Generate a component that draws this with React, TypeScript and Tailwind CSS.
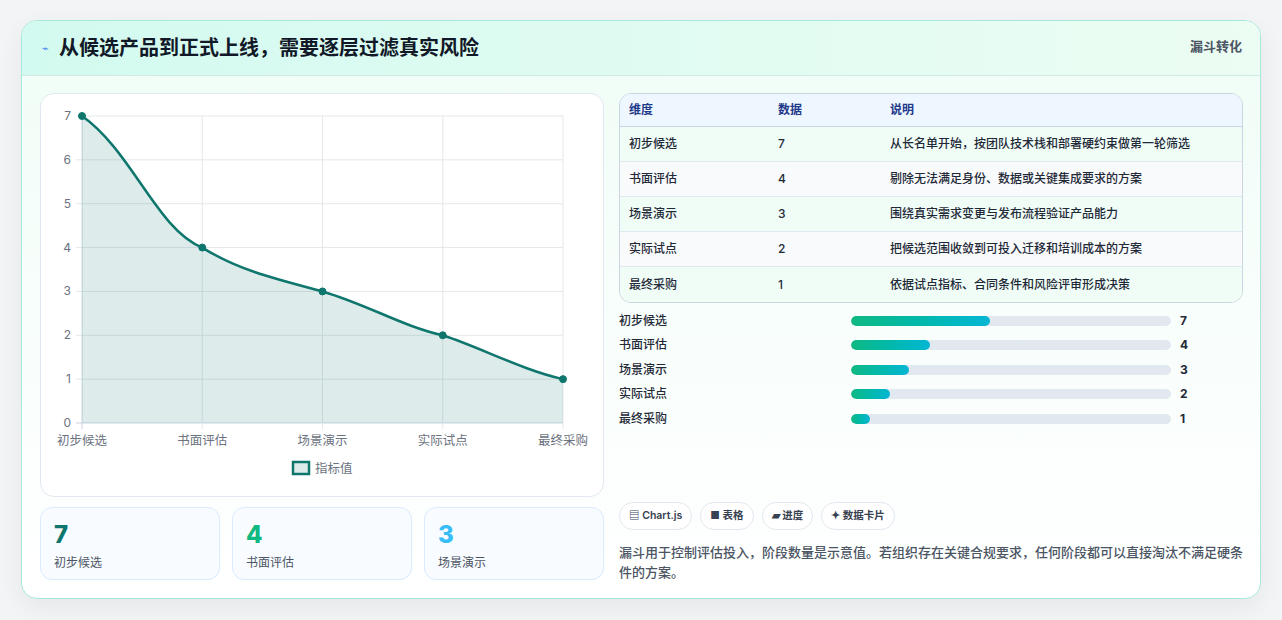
import React from "react";

const rows = [
  ["初步候选", 7, "从长名单开始，按团队技术栈和部署硬约束做第一轮筛选"],
  ["书面评估", 4, "剔除无法满足身份、数据或关键集成要求的方案"],
  ["场景演示", 3, "围绕真实需求变更与发布流程验证产品能力"],
  ["实际试点", 2, "把候选范围收敛到可投入迁移和培训成本的方案"],
  ["最终采购", 1, "依据试点指标、合同条件和风险评审形成决策"],
] as const;
const barW = [139, 79, 58, 39, 19];

function Chart() {
  const x0 = 41, x1 = 522, y0 = 21, y1 = 328;
  const xs = [0, 1, 2, 3, 4].map((i) => x0 + (i * (x1 - x0)) / 4);
  const y = (v: number) => y1 - (v * (y1 - y0)) / 7;
  const vals = [7, 4, 3, 2, 1];
  const pts = vals.map((v, i) => [xs[i], y(v)]);
  const line = `M${pts[0][0]},${pts[0][1]} C${xs[0] + 50},${y(6.2)} ${xs[1] - 45},${y(4.4)} ${pts[1][0]},${pts[1][1]} C${xs[1] + 35},${y(3.5)} ${xs[2] - 50},${y(3.3)} ${pts[2][0]},${pts[2][1]} C${xs[2] + 45},${y(2.7)} ${xs[3] - 40},${y(2.2)} ${pts[3][0]},${pts[3][1]} C${xs[3] + 40},${y(1.7)} ${xs[4] - 40},${y(1.2)} ${pts[4][0]},${pts[4][1]}`;
  return (
    <svg width="562" height="400" className="block">
      {[0, 1, 2, 3, 4, 5, 6, 7].map((v) => (
        <g key={v}>
          <line x1={x0 - 6} x2={x1} y1={y(v)} y2={y(v)} stroke={v === 0 ? "#cbd5e1" : "#e5e7eb"} />
          <text x={x0 - 11} y={y(v) + 4} textAnchor="end" fontSize="12" fill="#6b7280">{v}</text>
        </g>
      ))}
      {xs.map((x, i) => (
        <line key={i} x1={x} x2={x} y1={y0} y2={y1 + 6} stroke={i === 0 ? "#cbd5e1" : "#e5e7eb"} />
      ))}
      <path d={`${line} L${x1},${y1} L${x0},${y1} Z`} fill="rgba(15,118,110,0.14)" />
      <path d={line} fill="none" stroke="#0f766e" strokeWidth="2.5" />
      {pts.map(([x, yy], i) => (
        <circle key={i} cx={x} cy={yy} r="3.5" fill="#0f766e" stroke="#0f766e" />
      ))}
      {rows.map((r, i) => (
        <text key={i} x={xs[i]} y={350} textAnchor="middle" fontSize="12.5" fill="#6b7280">{r[0]}</text>
      ))}
      <rect x="252" y="367" width="16" height="12" fill="rgba(15,118,110,0.14)" stroke="#0f766e" strokeWidth="2.5" />
      <text x="274" y="378" fontSize="12.5" fill="#6b7280">指标值</text>
    </svg>
  );
}

export default function App() {
  return (
    <div className="w-[1282px] h-[620px] bg-[#f3f4f6] pt-[20px] pl-[21px]" style={{ fontFamily: "Inter, 'Noto Sans CJK SC', sans-serif" }}>
      <div className="w-[1240px] h-[579px] rounded-[16px] border border-[#a7e8dc] bg-gradient-to-b from-[#f0fdf7] to-white overflow-hidden shadow-[0_8px_24px_rgba(0,0,0,0.06)]">
        <div className="h-[55px] bg-gradient-to-r from-[#d3faf0] to-[#ecfdf3] border-b border-[#cfe9e4] flex items-center justify-between pl-[20px] pr-[18px]">
          <div className="flex items-center gap-[10px]">
            <span className="text-[11px] text-[#3b82f6]">⌁</span>
            <span className="text-[20px] font-bold text-[#111827]">从候选产品到正式上线，需要逐层过滤真实风险</span>
          </div>
          <span className="text-[13px] font-bold text-[#4b5563] self-start mt-[16px]">漏斗转化</span>
        </div>
        <div className="flex gap-[15px] pl-[18px] pt-[17px]">
          <div className="w-[564px] flex flex-col gap-[10px]">
            <div className="h-[404px] rounded-[14px] border border-[#e2e8f0] bg-white pt-[1px]">
              <Chart />
            </div>
            <div className="flex gap-[12px]">
              {[["7", "text-[#0f766e]", "初步候选"], ["4", "text-[#10b981]", "书面评估"], ["3", "text-[#38bdf8]", "场景演示"]].map(([n, c, l]) => (
                <div key={l} className="w-[180px] h-[73px] rounded-[12px] border border-[#dbeafe] bg-[#f8fbff] px-[13px] pt-[13px]">
                  <div className={`text-[24px] leading-[28px] font-extrabold ${c}`}>{n}</div>
                  <div className="text-[12px] text-[#4b5563] mt-[5px]">{l}</div>
                </div>
              ))}
            </div>
          </div>
          <div className="w-[624px]">
            <div className="rounded-[12px] border border-[#cbd5e1] overflow-hidden text-[12px] font-medium">
              <div className="flex h-[33px] items-center bg-[#eef6ff] border-b border-[#cbd5e1] text-[#1e3a8a] font-semibold">
                <div className="w-[158px] pl-[9px]">维度</div>
                <div className="w-[112px]">数据</div>
                <div>说明</div>
              </div>
              {rows.map((r, i) => (
                <div key={i} className={`flex h-[35px] items-center text-[#1f2937] ${i % 2 ? "bg-[#f8fafc]" : "bg-[#f0fdf7]"} ${i < 4 ? "border-b border-[#e2e8f0]" : ""}`}>
                  <div className="w-[158px] pl-[9px]">{r[0]}</div>
                  <div className="w-[112px]">{r[1]}</div>
                  <div>{r[2]}</div>
                </div>
              ))}
            </div>
            <div className="flex flex-col gap-[9.5px] mt-[10px]">
              {rows.map((r, i) => (
                <div key={i} className="flex items-center h-[15px] text-[12px] font-medium text-[#1f2937]">
                  <div className="w-[232px]">{r[0]}</div>
                  <div className="w-[320px] h-[10px] rounded-full bg-[#e2e8f0] overflow-hidden">
                    <div className="h-full rounded-full bg-gradient-to-r from-[#10b981] to-[#06b6d4]" style={{ width: barW[i] }} />
                  </div>
                  <div className="ml-[9px] font-bold">{r[1]}</div>
                </div>
              ))}
            </div>
            <div className="flex gap-[8px] mt-[76px]">
              {["▤ Chart.js", "■ 表格", "▰ 进度", "✦ 数据卡片"].map((t) => (
                <span key={t} className="h-[28px] px-[9px] rounded-full border border-[#e2e8f0] bg-white text-[10.5px] font-semibold text-[#374151] flex items-center">{t}</span>
              ))}
            </div>
            <p className="mt-[12px] w-[632px] text-[13px] leading-[20px] text-[#4b5563] font-medium">漏斗用于控制评估投入，阶段数量是示意值。若组织存在关键合规要求，任何阶段都可以直接淘汰不满足硬条件的方案。</p>
          </div>
        </div>
      </div>
    </div>
  );
}
